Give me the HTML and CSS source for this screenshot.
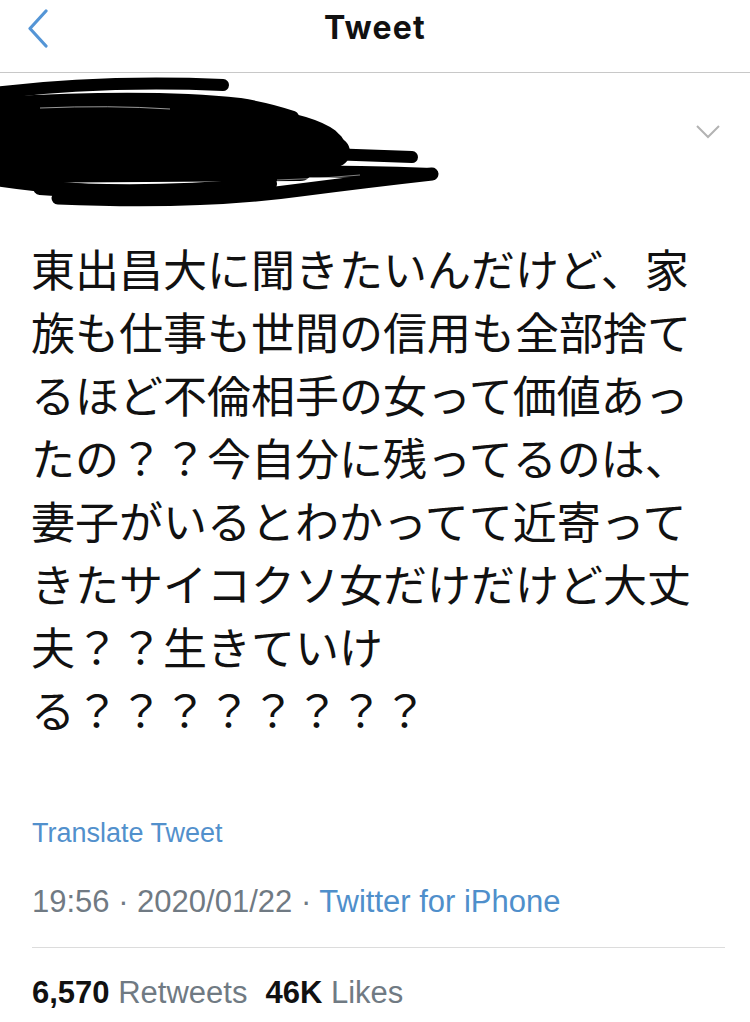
FILE: index.html
```html
<!DOCTYPE html>
<html lang="ja">
<head>
<meta charset="utf-8">
<title>Tweet</title>
<link rel="stylesheet" href="styles.css">
</head>
<body>
<header class="nav">
  <svg class="back" width="24" height="42" viewBox="0 0 24 42"><path d="M19 5 L3 22.5 L19 40" fill="none" stroke="#5495d6" stroke-width="3.2" stroke-linecap="round" stroke-linejoin="round"/></svg>
  <h1 class="title">Tweet</h1>
</header>
<main class="tweet">
  <div class="author">
    <svg class="redact" width="440" height="140" viewBox="0 75 440 140">
      <g fill="none" stroke="#000" stroke-linecap="round" stroke-linejoin="round">
        <path d="M-5,93 Q100,80 223,85" stroke-width="12"/>
        <path d="M-5,103 Q150,94 240,104 Q270,109 293,117" stroke-width="12"/>
        <path d="M-5,120 Q150,108 250,118 Q310,126 328,140" stroke-width="24"/>
        <path d="M-5,140 Q180,128 328,147" stroke-width="34"/>
        <path d="M-5,160 Q200,148 335,152" stroke-width="30"/>
        <path d="M300,153 L412,157" stroke-width="12"/>
        <path d="M-5,170 L300,168" stroke-width="26"/>
        <path d="M200,172 Q330,170 432,174" stroke-width="12"/>
        <path d="M58,198 Q200,204 300,190 Q370,181 432,174" stroke-width="13"/>
        <path d="M-5,180 Q60,190 150,193" stroke-width="12"/>
        <path d="M40,188 Q150,196 270,184" stroke-width="14"/>
      </g>
      <path d="M40,108 Q110,105 170,109" stroke="#fff" stroke-width="1" fill="none" opacity="0.6"/>
      <path d="M277,180 Q320,179 360,175" stroke="#fff" stroke-width="1" fill="none" opacity="0.5"/>
    </svg>
    <svg class="caret" width="26" height="16" viewBox="0 0 26 16"><path d="M2 2 L13 13 L24 2" fill="none" stroke="#b3b3b3" stroke-width="2"/></svg>
  </div>
  <p class="text">東出昌大に聞きたいんだけど、家<br>族も仕事も世間の信用も全部捨て<br>るほど不倫相手の女って価値あっ<br>たの？？今自分に残ってるのは、<br>妻子がいるとわかってて近寄って<br>きたサイコクソ女だけだけど大丈<br>夫？？生きていけ<br>る？？？？？？？？</p>
  <a class="translate">Translate Tweet</a>
  <div class="meta">19:56 · 2020/01/22 · <span class="source">Twitter for iPhone</span></div>
  <div class="stats"><span class="stat"><b>6,570</b> Retweets</span><span class="stat"><b>46K</b> Likes</span></div>
</main>
</body>
</html>
```
FILE: styles.css
```css
* { box-sizing: border-box; }
html, body { margin: 0; padding: 0; background: #fff; }
body {
  width: 750px;
  height: 1022px;
  overflow: hidden;
  font-family: "Liberation Sans", Arial, sans-serif;
  color: #14171a;
}
.nav {
  position: relative;
  height: 73px;
  border-bottom: 1px solid #c8c8c8;
  display: flex;
  justify-content: center;
  padding-top: 8px;
}
.back {
  position: absolute;
  left: 27px;
  top: 6px;
}
.title {
  margin: 0;
  font-family: Inter, "Liberation Sans", sans-serif;
  font-weight: 700;
  font-size: 32px;
  line-height: 40px;
  letter-spacing: 1.2px;
  color: #111;
}
.tweet {
  padding: 0 25px 0 32px;
}
.author {
  display: flex;
  justify-content: space-between;
  align-items: flex-start;
  margin-left: -32px;
  height: 140px;
}
.redact { display: block; margin-top: 2px; }
.caret { margin-top: 51px; margin-right: 4px; }
.text {
  margin: 24px 0 0 -1px;
  font-family: "Noto Sans CJK JP", "Noto Sans CJK SC", sans-serif;
  font-size: 44px;
  line-height: 63px;
  white-space: nowrap;
  color: #111;
}
.translate {
  display: block;
  margin-top: 77px;
  font-size: 27px;
  line-height: 30px;
  color: #5290cc;
}
.meta {
  margin-top: 37px;
  font-size: 31px;
  line-height: 34px;
  color: #707a83;
  padding-bottom: 28px;
  border-bottom: 1px solid #dcdcdc;
}
.source { color: #4f8fcb; }
.stats {
  display: flex;
  gap: 18px;
  margin-top: 28px;
  font-size: 31px;
  line-height: 34px;
  color: #707a83;
}
.stats b { color: #111; font-weight: 700; }
```
